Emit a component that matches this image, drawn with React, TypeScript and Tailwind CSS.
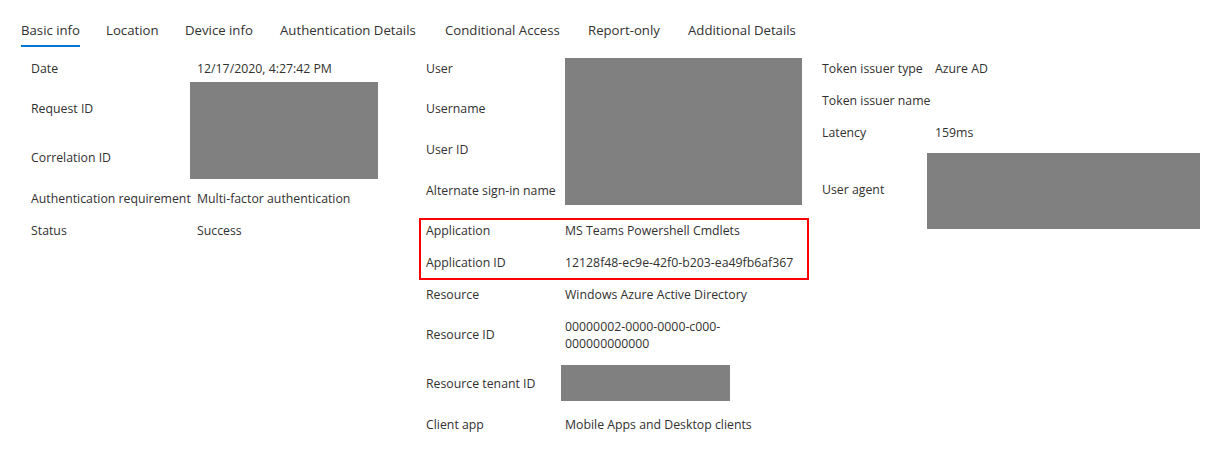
import React from "react";

type Row = { label: string; value?: React.ReactNode; h: number };

const tabs = [
  { name: "Basic info", w: "w-[85px]", active: true },
  { name: "Location", w: "w-[79px]" },
  { name: "Device info", w: "w-[95px]" },
  { name: "Authentication Details", w: "w-[165px]" },
  { name: "Conditional Access", w: "w-[143px]" },
  { name: "Report-only", w: "w-[100px]" },
  { name: "Additional Details", w: "w-[140px]" },
];

const left: Row[] = [
  { label: "Date", value: "12/17/2020, 4:27:42 PM", h: 32 },
  { label: "Request ID", h: 48 },
  { label: "Correlation ID", h: 50 },
  { label: "Authentication requirement", value: "Multi-factor authentication", h: 32 },
  { label: "Status", value: "Success", h: 32 },
];

const middle: Row[] = [
  { label: "User", h: 32 },
  { label: "Username", h: 48 },
  { label: "User ID", h: 34 },
  { label: "Alternate sign-in name", h: 48 },
  { label: "Application", value: "MS Teams Powershell Cmdlets", h: 32 },
  { label: "Application ID", value: "12128f48-ec9e-42f0-b203-ea49fb6af367", h: 32 },
  { label: "Resource", value: "Windows Azure Active Directory", h: 32 },
  {
    label: "Resource ID",
    value: (
      <span className="block leading-[17px]">
        00000002-0000-0000-c000-
        <br />
        000000000000
      </span>
    ),
    h: 48,
  },
  { label: "Resource tenant ID", h: 50 },
  { label: "Client app", value: "Mobile Apps and Desktop clients", h: 32 },
];

const right: Row[] = [
  { label: "Token issuer type", value: "Azure AD", h: 32 },
  { label: "Token issuer name", h: 32 },
  { label: "Latency", value: "159ms", h: 32 },
  { label: "User agent", h: 82 },
];

const heightClass: Record<number, string> = {
  32: "h-[32px]",
  34: "h-[34px]",
  48: "h-[48px]",
  50: "h-[50px]",
  82: "h-[82px]",
};

function Rows({ rows, labelW }: { rows: Row[]; labelW: string }) {
  return (
    <>
      {rows.map((r) => (
        <div key={r.label} className={`flex items-center pt-[2px] ${heightClass[r.h]}`}>
          <div className={`${labelW} shrink-0 whitespace-nowrap`}>{r.label}</div>
          <div className="whitespace-nowrap">{r.value}</div>
        </div>
      ))}
    </>
  );
}

export default function App() {
  return (
    <div
      className="h-[459px] w-[1211px] bg-white text-[12.3px] text-[#323130]"
      style={{ fontFamily: '"Open Sans", "Noto Sans", sans-serif' }}
    >
      <div className="flex h-[52px] pl-[21px]">
        {tabs.map((t) => (
          <div key={t.name} className={`${t.w} shrink-0 pt-[19px]`}>
            <div
              className={`inline-block h-[28px] whitespace-nowrap text-[13.2px] leading-[22px] ${
                t.active ? "border-b-2 border-[#0078d4] text-[#323130]" : "text-[#323130]"
              }`}
            >
              {t.name}
            </div>
          </div>
        ))}
      </div>

      <div className="flex pl-[31px]">
        <div className="relative w-[395px] shrink-0">
          <Rows rows={left} labelW="w-[166px]" />
          <div className="absolute left-[159px] top-[30px] h-[97px] w-[188px] bg-[#808080]" />
        </div>

        <div className="relative w-[396px] shrink-0">
          <Rows rows={middle} labelW="w-[139px]" />
          <div className="absolute left-[139px] top-[6px] h-[147px] w-[237px] bg-[#808080]" />
          <div className="absolute left-[-7px] top-[166px] h-[62px] w-[390px] border-2 border-[#ff0000]" />
          <div className="absolute left-[135px] top-[313px] h-[36px] w-[169px] bg-[#808080]" />
        </div>

        <div className="relative flex-1">
          <Rows rows={right} labelW="w-[113px]" />
          <div className="absolute left-[105px] top-[101px] h-[76px] w-[273px] bg-[#808080]" />
        </div>
      </div>
    </div>
  );
}
